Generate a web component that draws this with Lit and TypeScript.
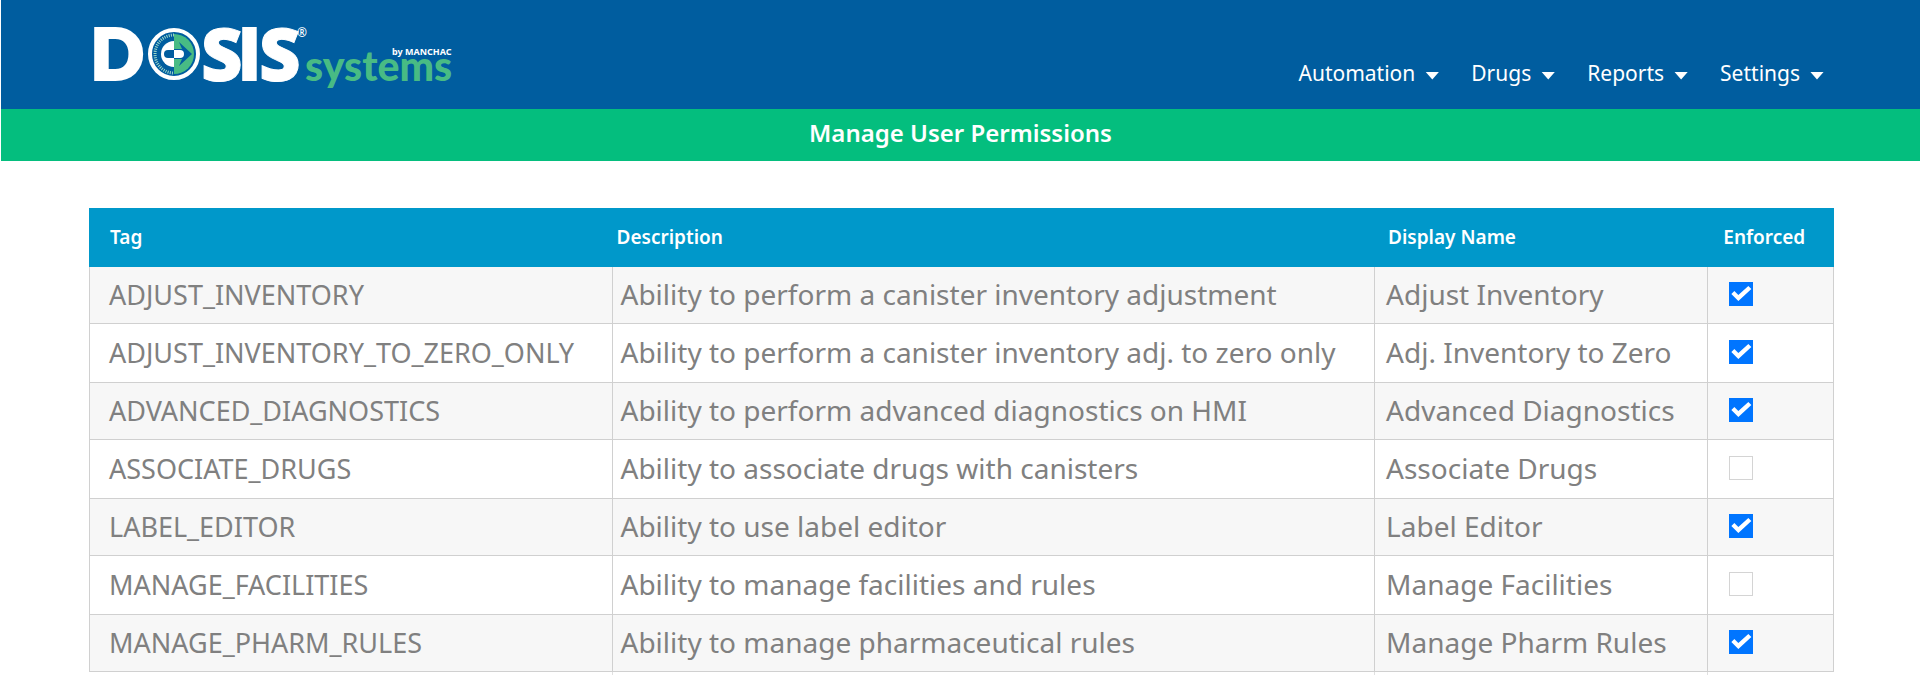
import { LitElement, html, svg, css } from "lit";
import { customElement, state } from "lit/decorators.js";

interface Permission {
  tag: string;
  description: string;
  name: string;
  enforced: boolean;
}

const MENUS = ["Automation", "Drugs", "Reports", "Settings"];

@customElement("dosis-logo")
class DosisLogo extends LitElement {
  static styles = css`
    :host {
      display: block;
      line-height: 0;
    }
    .word {
      font-family: "Open Sans", sans-serif;
      font-weight: 800;
      font-size: 72px;
      fill: #fff;
      stroke: #fff;
      stroke-width: 1px;
    }
    .block {
      font-family: Lato, sans-serif;
      font-weight: 900;
      font-size: 69px;
      stroke-width: 4px;
    }
    .mark {
      font-family: "Noto Sans", sans-serif;
      font-size: 12px;
      font-weight: 600;
      fill: #fff;
    }
    .sub {
      font-family: Lato, sans-serif;
      font-weight: 900;
      font-size: 41px;
      fill: #48bb84;
    }
    .by {
      font-family: "Noto Sans", sans-serif;
      font-weight: 700;
      font-size: 9px;
      fill: #fff;
    }
  `;

  render() {
    return html`
      <svg width="370" height="109" viewBox="-6 -27 370 109" role="img" aria-label="DOSIS systems by MANCHAC">
        <text class="word block" x="-3" y="52">D</text>
        <text class="word" x="107" y="54">S</text>
        <text class="word block" x="145" y="52">I</text>
        <text class="word" x="165" y="54">S</text>
        ${svg`
          <g transform="translate(80 27)">
            <circle r="24" fill="#005d9f" stroke="#fff" stroke-width="4"/>
            <path d="M0 -19 A19 19 0 0 0 0 19" fill="none" stroke="#9fd8c8" stroke-width="3" stroke-dasharray="1 1.2"/>
            <path d="M0 -13 A13 13 0 0 0 0 13 Z" fill="#fff"/>
            <path d="M0 -20 A20 20 0 0 1 0 20 Z" fill="#48bb84"/>
            <path d="M5 -12 L18 0 L5 12 L8 5 H0 V-5 H8 Z" fill="#005d9f"/>
            <path d="M0 -4 H-6 A4 4 0 0 0 -6 4 H0 Z" fill="#005d9f"/>
            <path d="M0 -4 H6 A4 4 0 0 1 6 4 H0 Z" fill="#fff"/>
          </g>
        `}
        <text class="mark" x="203" y="10">®</text>
        <text class="sub" x="211" y="54">systems</text>
        <text class="by" x="298" y="28">by MANCHAC</text>
      </svg>
    `;
  }
}

@customElement("app-root")
class AppRoot extends LitElement {
  static styles = css`
    :host {
      display: block;
      box-sizing: border-box;
      padding-left: 1px;
      background: #fff;
      font-family: "Noto Sans", "Open Sans", sans-serif;
      color: #808080;
    }
    .bar {
      display: flex;
      justify-content: space-between;
      align-items: flex-start;
      padding: 0 96px 0 87px;
      background: #005d9f;
    }
    .menus {
      display: flex;
      gap: 32px;
      padding-top: 58px;
    }
    .menu {
      display: flex;
      align-items: center;
      gap: 10px;
      padding: 0;
      border: 0;
      background: none;
      color: #fff;
      font: inherit;
      font-size: 21px;
      line-height: 30px;
      cursor: pointer;
    }
    .caret {
      width: 14px;
      height: 8px;
      margin-top: 5px;
      background: #fff;
      clip-path: polygon(0 0, 100% 0, 50% 100%);
    }
    .title {
      margin: 0;
      padding-bottom: 4px;
      background: #04be7e;
      color: #fff;
      text-align: center;
      font-size: 24px;
      font-weight: 600;
      line-height: 48px;
    }
    .content {
      padding: 47px 86px 0 88px;
    }
    .grid {
      width: 100%;
      table-layout: fixed;
      border-collapse: separate;
      border-spacing: 0;
    }
    .c-tag {
      width: 30%;
    }
    .c-desc {
      width: 43.7%;
    }
    .c-name {
      width: 19.1%;
    }
    th {
      height: 59px;
      box-sizing: border-box;
      padding: 0 0 2px 21px;
      background: #0098ca;
      color: #fff;
      text-align: left;
      font-size: 19px;
      font-weight: 600;
    }
    th.desc {
      padding-left: 4px;
    }
    th.name {
      padding-left: 13px;
    }
    th.enf {
      padding-left: 15px;
    }
    .row td {
      height: 59px;
      box-sizing: border-box;
      padding: 0 0 2px;
      border-right: 1px solid #d0d0d0;
      border-bottom: 1px solid #d0d0d0;
      font-size: 28px;
      line-height: 38px;
      white-space: nowrap;
    }
    .row:nth-child(odd) td {
      height: 57px;
      background: #f7f7f7;
    }
    .row td.tag {
      padding-left: 19px;
      padding-bottom: 0;
      border-left: 1px solid #d0d0d0;
      font-size: 27px;
    }
    .row td.desc {
      padding-left: 8px;
    }
    .row td.name {
      padding-left: 11px;
    }
    .row td.enf {
      padding-left: 21px;
    }
    .tail td {
      height: 3px;
      padding: 0;
      border-right: 1px solid #e0e0e0;
    }
    .tail td:last-child {
      border-right-color: transparent;
    }
    .check {
      appearance: none;
      display: block;
      width: 24px;
      height: 24px;
      margin: 0;
      border: 1px solid #d4d4d4;
      background: #fff;
    }
    .check:checked {
      border: 0;
      background: #0075ff;
    }
    .check:checked::before {
      content: "";
      display: block;
      width: 24px;
      height: 24px;
      background: #fff;
      clip-path: polygon(2px 12px, 9px 19px, 22px 7px, 19px 4px, 9px 13px, 5px 9px);
    }
  `;

  @state() permissions: Permission[] = [
    { tag: "ADJUST_INVENTORY", description: "Ability to perform a canister inventory adjustment", name: "Adjust Inventory", enforced: true },
    { tag: "ADJUST_INVENTORY_TO_ZERO_ONLY", description: "Ability to perform a canister inventory adj. to zero only", name: "Adj. Inventory to Zero", enforced: true },
    { tag: "ADVANCED_DIAGNOSTICS", description: "Ability to perform advanced diagnostics on HMI", name: "Advanced Diagnostics", enforced: true },
    { tag: "ASSOCIATE_DRUGS", description: "Ability to associate drugs with canisters", name: "Associate Drugs", enforced: false },
    { tag: "LABEL_EDITOR", description: "Ability to use label editor", name: "Label Editor", enforced: true },
    { tag: "MANAGE_FACILITIES", description: "Ability to manage facilities and rules", name: "Manage Facilities", enforced: false },
    { tag: "MANAGE_PHARM_RULES", description: "Ability to manage pharmaceutical rules", name: "Manage Pharm Rules", enforced: true },
  ];

  private toggle(index: number) {
    this.permissions = this.permissions.map((p, i) =>
      i === index ? { ...p, enforced: !p.enforced } : p
    );
  }

  render() {
    return html`
      <header class="bar">
        <dosis-logo></dosis-logo>
        <nav class="menus" aria-label="Main">
          ${MENUS.map(
            (label) => html`
              <button class="menu" type="button" aria-haspopup="true">
                ${label}<span class="caret"></span>
              </button>
            `
          )}
        </nav>
      </header>
      <h1 class="title">Manage User Permissions</h1>
      <main class="content">
        <table class="grid">
          <colgroup>
            <col class="c-tag" />
            <col class="c-desc" />
            <col class="c-name" />
            <col />
          </colgroup>
          <thead>
            <tr>
              <th scope="col">Tag</th>
              <th scope="col" class="desc">Description</th>
              <th scope="col" class="name">Display Name</th>
              <th scope="col" class="enf">Enforced</th>
            </tr>
          </thead>
          <tbody>
            ${this.permissions.map(
              (p, i) => html`
                <tr class="row">
                  <td class="tag">${p.tag}</td>
                  <td class="desc">${p.description}</td>
                  <td class="name">${p.name}</td>
                  <td class="enf">
                    <input
                      class="check"
                      type="checkbox"
                      aria-label="Enforce ${p.name}"
                      .checked=${p.enforced}
                      @change=${() => this.toggle(i)}
                    />
                  </td>
                </tr>
              `
            )}
          </tbody>
          <tfoot aria-hidden="true">
            <tr class="tail"><td></td><td></td><td></td><td></td></tr>
          </tfoot>
        </table>
      </main>
    `;
  }
}
